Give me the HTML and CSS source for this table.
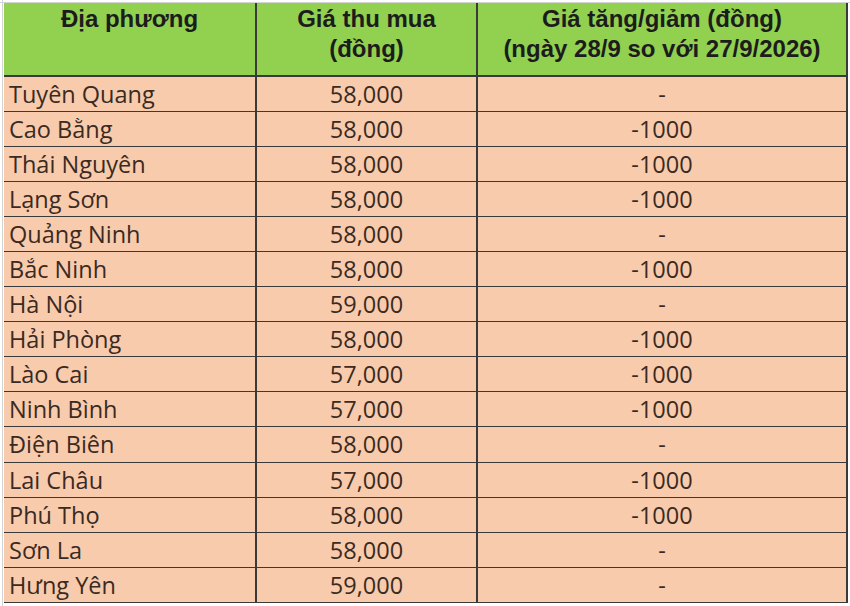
FILE: index.html
```html
<!DOCTYPE html>
<html lang="vi">
<head>
<meta charset="utf-8">
<title>Giá thu mua</title>
<link rel="stylesheet" href="styles.css">
</head>
<body>
<div class="sheet">
<table class="prices">
  <colgroup><col class="c1"><col class="c2"><col class="c3"></colgroup>
  <thead>
    <tr>
      <th class="top">Địa phương</th>
      <th>Giá thu mua<br>(đồng)</th>
      <th>Giá tăng/giảm (đồng)<br>(ngày 28/9 so với 27/9/2026)</th>
    </tr>
  </thead>
  <tbody>
    <tr><td>Tuyên Quang</td><td>58,000</td><td>-</td></tr>
    <tr><td>Cao Bằng</td><td>58,000</td><td>-1000</td></tr>
    <tr><td>Thái Nguyên</td><td>58,000</td><td>-1000</td></tr>
    <tr><td>Lạng Sơn</td><td>58,000</td><td>-1000</td></tr>
    <tr><td>Quảng Ninh</td><td>58,000</td><td>-</td></tr>
    <tr><td>Bắc Ninh</td><td>58,000</td><td>-1000</td></tr>
    <tr><td>Hà Nội</td><td>59,000</td><td>-</td></tr>
    <tr><td>Hải Phòng</td><td>58,000</td><td>-1000</td></tr>
    <tr><td>Lào Cai</td><td>57,000</td><td>-1000</td></tr>
    <tr><td>Ninh Bình</td><td>57,000</td><td>-1000</td></tr>
    <tr><td>Điện Biên</td><td>58,000</td><td>-</td></tr>
    <tr><td>Lai Châu</td><td>57,000</td><td>-1000</td></tr>
    <tr><td>Phú Thọ</td><td>58,000</td><td>-1000</td></tr>
    <tr><td>Sơn La</td><td>58,000</td><td>-</td></tr>
    <tr><td>Hưng Yên</td><td>59,000</td><td>-</td></tr>
  </tbody>
</table>
</div>
</body>
</html>
```
FILE: styles.css
```css
html, body {
  margin: 0;
  padding: 0;
  background: #ffffff;
}
.sheet {
  width: 850px;
  height: 606px;
  box-sizing: border-box;
  padding: 3px 0 0 4px;
  background:
    linear-gradient(#d4d4d4, #d4d4d4) 0 2px / 100% 1px no-repeat,
    linear-gradient(#d4d4d4, #d4d4d4) 2px 0 / 1px 100% no-repeat,
    #ffffff;
  overflow: hidden;
}
.prices {
  border-collapse: collapse;
  table-layout: fixed;
  width: 843px;
}
.c1 { width: 252px; }
.c2 { width: 221px; }
.c3 { width: 370px; }
.prices th {
  background: #92d050;
  height: 73px;
  padding: 0;
  font-family: "Liberation Sans", Arial, sans-serif;
  font-weight: bold;
  font-size: 24px;
  line-height: 30px;
  color: #1c1c1c;
  text-align: center;
  vertical-align: top;
  padding-top: 1px;
  box-sizing: border-box;
  border-right: 2px solid #3a3a3a;
  border-bottom: 2px solid #3a3a3a;
}
.prices td {
  background: #f8cbad;
  height: 35.1px;
  padding: 0;
  box-sizing: border-box;
  font-family: "Open Sans", "Noto Sans", sans-serif;
  font-size: 23.5px;
  color: #3a2a22;
  text-align: center;
  vertical-align: middle;
  border-right: 2px solid #3a3a3a;
  border-bottom: 1.5px solid #3a3a3a;
}
.prices td:first-child {
  text-align: left;
  padding-left: 5px;
}
```
